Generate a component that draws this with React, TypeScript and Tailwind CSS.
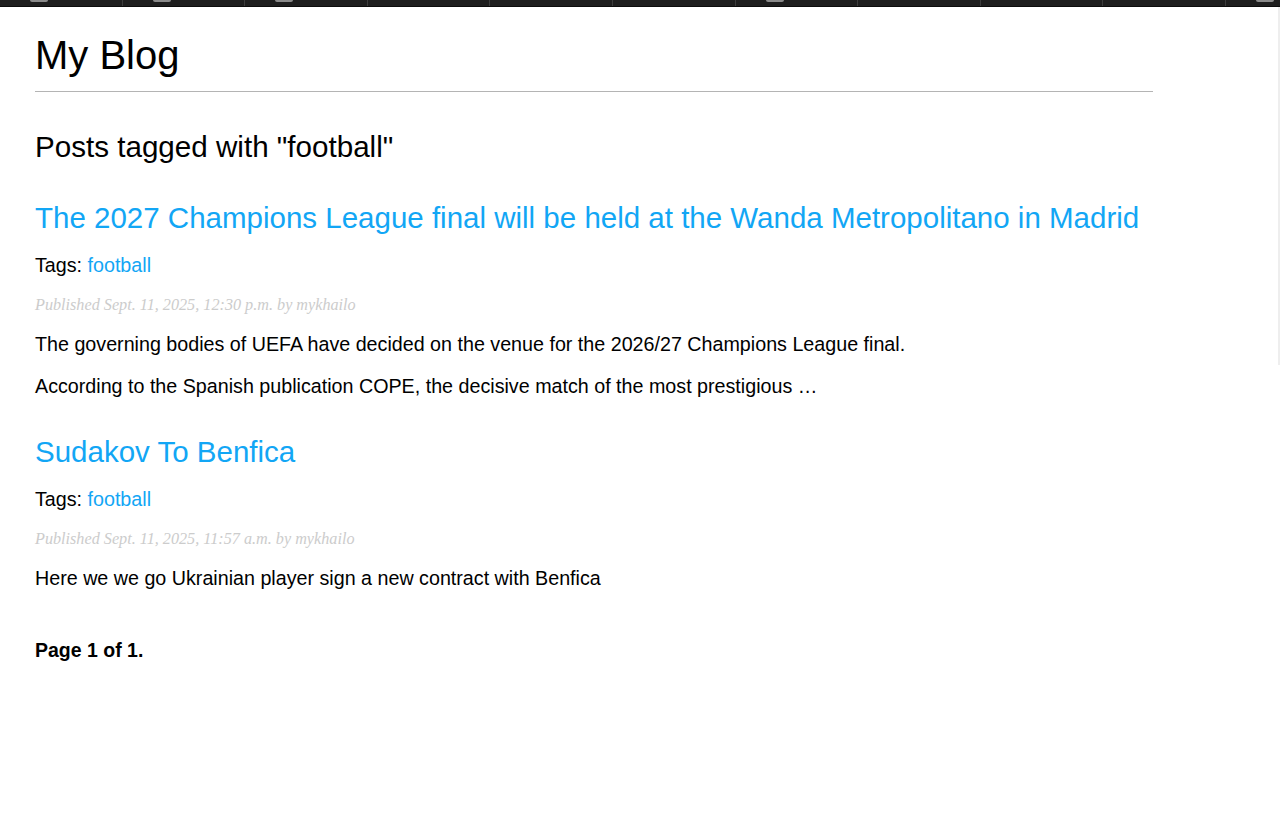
import React from "react";

const tabs = [true, true, true, false, false, false, true, false, false, false, true];

const posts = [
  {
    title: "The 2027 Champions League final will be held at the Wanda Metropolitano in Madrid",
    date: "Sept. 11, 2025, 12:30 p.m.",
    body: [
      "The governing bodies of UEFA have decided on the venue for the 2026/27 Champions League final.",
      "According to the Spanish publication COPE, the decisive match of the most prestigious …",
    ],
  },
  {
    title: "Sudakov To Benfica",
    date: "Sept. 11, 2025, 11:57 a.m.",
    body: ["Here we we go Ukrainian player sign a new contract with Benfica"],
  },
];

export default function App() {
  return (
    <div className="min-h-[826px] bg-white text-black" style={{ fontFamily: '"Liberation Sans", Arial, sans-serif' }}>
      {/* browser tab strip, cut off at the top */}
      <div className="flex h-[7px] overflow-hidden border-b border-[#0c0c0c] bg-[#1e1e1e]">
        {tabs.map((hasIcon, i) => (
          <div key={i} className="relative h-full w-[122.6px] shrink-0 border-r border-[#3c3c3c]">
            {hasIcon && <div className="absolute left-[30px] top-0 h-[2px] w-[18px] rounded-b-sm bg-[#8a8a8a]" />}
          </div>
        ))}
      </div>

      <div className="flex">
        <div className="w-[1118px] shrink-0 pl-[35px] box-content">
          <h1 className="mt-[24px] text-[40px] leading-[48px]">My Blog</h1>
          <div className="mt-[12px] h-px bg-[#b4b4b4]" />

          <h2 className="mt-[37px] text-[29.6px] leading-[36px]">Posts tagged with "football"</h2>

          {posts.map((post, i) => (
            <div key={i} className={i === 0 ? "mt-[35px]" : "mt-[36px]"}>
              <h3 className="whitespace-nowrap text-[29.5px] leading-[36px] text-[#12a6f5]">{post.title}</h3>
              <p className="mt-[17px] text-[19.7px] leading-[24px]">
                Tags: <a className="text-[#12a6f5]">football</a>
              </p>
              <p
                className="mt-[18px] text-[16.2px] italic leading-[20px] text-[#cccccc]"
                style={{ fontFamily: '"Liberation Serif", Georgia, serif' }}
              >
                Published {post.date} by mykhailo
              </p>
              {post.body.map((line, j) => (
                <p key={j} className={j === 0 ? "mt-[17px] text-[19.7px] leading-[24px]" : "mt-[18px] text-[19.7px] leading-[24px]"}>
                  {line}
                </p>
              ))}
            </div>
          ))}

          <p className="mt-[48px] text-[19.5px] font-bold leading-[24px]">Page 1 of 1.</p>
        </div>

        {/* sidebar edge */}
        <div className="ml-auto h-[358px] w-[2px] bg-[#eeeeee]" />
      </div>
    </div>
  );
}
